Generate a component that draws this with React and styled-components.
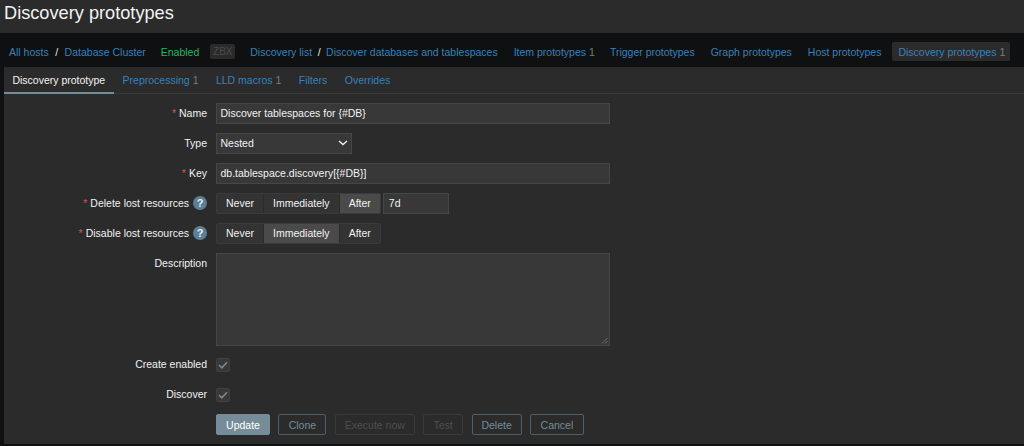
import React from "react";
import styled, { createGlobalStyle } from "styled-components";

const Global = createGlobalStyle`
  html, body { margin: 0; padding: 0; background: #0e1012; }
  body { font-family: "Liberation Sans", Arial, sans-serif; font-size: 10.5px; color: #f2f2f2; }
  * { box-sizing: border-box; }
`;
const Page = styled.div`
  width: 1024px; height: 446px; overflow: hidden; background: #0e1012;
  display: flex; flex-direction: column;
`;
const Header = styled.header`
  height: 33px; padding-left: 4px; display: flex; align-items: center; background: #2b2b2b;
`;
const Title = styled.h1`
  margin: 0 0 7px; font-size: 18.2px; font-weight: 400; color: #f2f2f2; line-height: 26px;
`;
const Nav = styled.nav`
  height: 34px; background: #0e1012; display: flex; align-items: center; padding: 3px 0 0 9px;
`;
const NavLink = styled.a`
  color: #3a80b8; white-space: nowrap; margin-left: ${p => p.$ml || 0}px; font-size: 10.5px;
`;
const Sep = styled.span`
  color: #e8e8e8; margin: 0 ${p => p.$m}px; font-size: 10.5px;
`;
const Status = styled.span`
  color: #2fb35e; margin-left: 15px;
`;
const Badge = styled.span`
  margin-left: 11px; width: 25px; height: 15px; background: #2b2b2b; border-radius: 2px;
  color: #4a4a4a; font-size: 10px; display: flex; align-items: center; justify-content: center;
`;
const Count = styled.span`
  color: #7c7c7c; margin-left: 3px;
`;
const ActiveLink = styled(NavLink)`
  background: #2b2b2b; border-radius: 2px; height: 19px; width: 118px;
  display: flex; align-items: center; padding-left: 6px;
`;
const Panel = styled.main`
  margin: 0 0 2px 4px; flex: 1; display: flex; flex-direction: column; background: #2b2b2b;
`;
const Tabs = styled.div`
  height: 27px; display: flex; border-bottom: 1px solid #383838; flex: none;
`;
const Tab = styled.a`
  height: 27px; padding: 0 9px 0 8.4px; display: flex; align-items: center;
  white-space: nowrap; font-size: 10.5px;
  color: ${p => p.$active ? "#f2f2f2" : "#3a80b8"};
  border-bottom: 2px solid ${p => p.$active ? "#768d99" : "transparent"};
`;
const Form = styled.form`
  display: grid; grid-template-columns: 203px 1fr; column-gap: 9px; row-gap: 9px;
  padding-top: 9px; align-items: center; grid-auto-rows: auto;
`;
const Label = styled.label`
  justify-self: end; display: flex; align-items: center; white-space: nowrap; color: #f2f2f2; font-size: 10.5px;
  align-self: ${p => p.$top ? "start" : "center"};
  height: 21px; padding-bottom: ${p => p.$top ? 2 : 1}px;
`;
const Star = styled.span`
  color: #d9534f; margin-right: 3px; font-size: 10.5px;
`;
const Help = styled.span`
  width: 14px; height: 14px; border-radius: 50%; background: #5c7f95; color: #e8eef2; margin-left: 4px;
  font-size: 11px; font-weight: 700; display: flex; align-items: center; justify-content: center;
`;
const Input = styled.div`
  width: ${p => p.$w || 394}px; height: 21px; background: #383838; border: 1px solid #464646;
  color: #f2f2f2; padding: 0 0 1px ${p => p.$pl || 3.5}px; display: flex; align-items: center; white-space: nowrap; font-size: 10.5px;
`;
const Select = styled(Input)`
  width: 136px; justify-content: space-between; padding-right: 3px;
`;
const Controls = styled.div`
  display: flex; gap: 2px; align-items: center;
`;
const Segments = styled.div`
  display: flex; height: 21px; border: 1px solid #3a3a3a; border-radius: 2px; background: #2b2b2b;
`;
const Segment = styled.span`
  padding: 0 9px 1px; display: flex; align-items: center; font-size: 10.5px; color: #f2f2f2;
  background: ${p => p.$on ? "#4a4a4a" : "#333333"};
  border-left: 1px solid #2b2b2b;
  &:first-child { border-left: none; }
`;
const TextArea = styled(Input)`
  height: 93px; position: relative; margin-bottom: -1px;
`;
const Grip = styled.svg`
  position: absolute; right: 1px; bottom: 1px;
`;
const Check = styled.span`
  width: 14px; height: 14px; background: #383838; border: 1px solid #404040; border-radius: 2px;
  display: flex; align-items: center; justify-content: center;
`;
const Buttons = styled.div`
  grid-column: 2; display: flex; gap: 8.4px;
`;
const Button = styled.span`
  height: 21px; width: ${p => p.$w}px; border-radius: 2px; display: flex; align-items: center; justify-content: center;
  font-size: 10.5px; white-space: nowrap;
  ${p => p.$primary ? "background:#768d99;color:#fff;border:1px solid #768d99;"
    : p.$off ? "color:#4f4f4f;border:1px solid #3a3a3a;"
    : "color:#768d99;border:1px solid #4d5f69;"}
`;
const Tick = () => (
  <svg width="10" height="8" viewBox="0 0 10 8" fill="none">
    <path d="M1 4l2.8 2.8L9 1.2" stroke="#768d99" strokeWidth="1.5" />
  </svg>
);
const Chevron = () => (
  <svg width="10" height="6" viewBox="0 0 10 6" fill="none">
    <path d="M1 1l4 3.6L9 1" stroke="#f2f2f2" strokeWidth="1.4" />
  </svg>
);

export default function App() {
  return (
    <Page>
      <Global />
      <Header><Title>Discovery prototypes</Title></Header>
      <Nav>
        <NavLink>All hosts</NavLink><Sep $m={6.5}>/</Sep><NavLink>Database Cluster</NavLink>
        <Status>Enabled</Status><Badge>ZBX</Badge>
        <NavLink $ml={15}>Discovery list</NavLink><Sep $m={5.5}>/</Sep>
        <NavLink>Discover databases and tablespaces</NavLink>
        <NavLink $ml={16}>Item prototypes<Count>1</Count></NavLink>
        <NavLink $ml={15}>Trigger prototypes</NavLink>
        <NavLink $ml={16}>Graph prototypes</NavLink>
        <NavLink $ml={16}>Host prototypes</NavLink>
        <ActiveLink $ml={11}>Discovery prototypes<Count>1</Count></ActiveLink>
      </Nav>
      <Panel>
        <Tabs>
          <Tab $active>Discovery prototype</Tab>
          <Tab>Preprocessing<Count>1</Count></Tab>
          <Tab>LLD macros<Count>1</Count></Tab>
          <Tab>Filters</Tab>
          <Tab>Overrides</Tab>
        </Tabs>
        <Form>
          <Label><Star>*</Star>Name</Label>
          <Input>Discover tablespaces for {"{#DB}"}</Input>
          <Label>Type</Label>
          <Select>Nested<Chevron /></Select>
          <Label><Star>*</Star>Key</Label>
          <Input>db.tablespace.discovery[{"{#DB}"}]</Input>
          <Label><Star>*</Star>Delete lost resources<Help>?</Help></Label>
          <Controls>
            <Segments>
              <Segment>Never</Segment><Segment>Immediately</Segment><Segment $on>After</Segment>
            </Segments>
            <Input $w={66} $pl={5}>7d</Input>
          </Controls>
          <Label><Star>*</Star>Disable lost resources<Help>?</Help></Label>
          <Controls>
            <Segments>
              <Segment>Never</Segment><Segment $on>Immediately</Segment><Segment>After</Segment>
            </Segments>
          </Controls>
          <Label $top>Description</Label>
          <TextArea>
            <Grip width="7" height="7" viewBox="0 0 7 7" fill="none">
              <path d="M6.5 1L1 6.5M6.5 4L4 6.5" stroke="#7c7c7c" strokeWidth="0.8" />
            </Grip>
          </TextArea>
          <Label>Create enabled</Label>
          <Check><Tick /></Check>
          <Label>Discover</Label>
          <Check><Tick /></Check>
          <Buttons>
            <Button $primary $w={54}>Update</Button>
            <Button $w={48}>Clone</Button>
            <Button $off $w={80}>Execute now</Button>
            <Button $off $w={40}>Test</Button>
            <Button $w={50}>Delete</Button>
            <Button $w={54}>Cancel</Button>
          </Buttons>
        </Form>
      </Panel>
    </Page>
  );
}
